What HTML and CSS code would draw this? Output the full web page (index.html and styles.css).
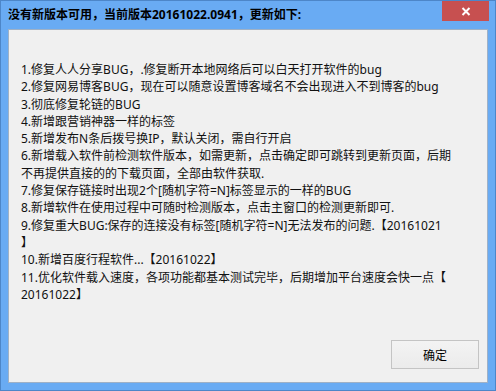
FILE: index.html
```html
<!DOCTYPE html>
<html lang="zh-CN">
<head>
<meta charset="utf-8">
<title>更新</title>
<link rel="stylesheet" href="styles.css">
</head>
<body>
<div class="window">
  <div class="titlebar">
    <div class="title">没有新版本可用，当前版本20161022.0941，更新如下:</div>
    <div class="close" aria-label="关闭">
      <svg width="10" height="9" viewBox="0 0 10 9"><path d="M1.5 1 L8.5 8 M8.5 1 L1.5 8" stroke="#fff" stroke-width="2" fill="none"/></svg>
    </div>
  </div>
  <div class="client">
    <div class="notes">
      <div class="line">1.修复人人分享BUG，.修复断开本地网络后可以白天打开软件的bug</div>
      <div class="line">2.修复网易博客BUG，现在可以随意设置博客域名不会出现进入不到博客的bug</div>
      <div class="line">3.彻底修复轮链的BUG</div>
      <div class="line">4.新增跟营销神器一样的标签</div>
      <div class="line">5.新增发布N条后拨号换IP，默认关闭，需自行开启</div>
      <div class="line">6.新增载入软件前检测软件版本，如需更新，点击确定即可跳转到更新页面，后期</div>
      <div class="line">不再提供直接的的下载页面，全部由软件获取.</div>
      <div class="line">7.修复保存链接时出现2个[随机字符=N]标签显示的一样的BUG</div>
      <div class="line">8.新增软件在使用过程中可随时检测版本，点击主窗口的检测更新即可.</div>
      <div class="line">9.修复重大BUG:保存的连接没有标签[随机字符=N]无法发布的问题.【20161021</div>
      <div class="line">】</div>
      <div class="line">10.新增百度行程软件...【20161022】</div>
      <div class="line">11.优化软件载入速度，各项功能都基本测试完毕，后期增加平台速度会快一点【</div>
      <div class="line">20161022】</div>
    </div>
    <div class="footer">
      <button class="ok" type="button">确定</button>
    </div>
  </div>
</div>
</body>
</html>
```

FILE: styles.css
```css
* { box-sizing: border-box; }

html, body {
  margin: 0;
  padding: 0;
  background: #ffffff;
}

body {
  font-family: "Noto Sans", "Noto Sans CJK SC", sans-serif;
  font-size: 12px;
  color: #000;
}

.window {
  width: 496px;
  height: 391px;
  background: #69abf3;
  border: 1px solid #4d86c8;
  display: flex;
  flex-direction: column;
}

.titlebar {
  height: 28px;
  display: flex;
  align-items: flex-start;
  justify-content: space-between;
  flex: none;
}

.title {
  padding-left: 7px;
  padding-top: 6px;
  font-weight: bold;
  font-size: 12px;
  line-height: 16px;
  white-space: nowrap;
  color: #000;
}

.close {
  width: 47px;
  height: 20px;
  margin-right: 6px;
  background: #c75050;
  display: flex;
  align-items: center;
  justify-content: center;
}

.close svg { display: block; }

.client {
  flex: 1;
  margin: 0 7px 7px 7px;
  background: #f0f0f0;
  border: 1px solid #9fb1c6;
  display: flex;
  flex-direction: column;
}

.notes {
  flex: 1;
  padding: 31px 0 0 12px;
  line-height: 17.3px;
  color: #111;
}

.line {
  white-space: nowrap;
  height: 17.3px;
}

.footer {
  display: flex;
  justify-content: flex-end;
  padding: 0 8px 13px 0;
}

.ok {
  width: 88px;
  height: 29px;
  border: 1px solid #c4c4c4;
  background: linear-gradient(#f3f3f3, #ebebeb);
  font-family: "Noto Sans CJK SC", sans-serif;
  font-size: 12px;
  color: #000;
  padding: 0;
}
```
